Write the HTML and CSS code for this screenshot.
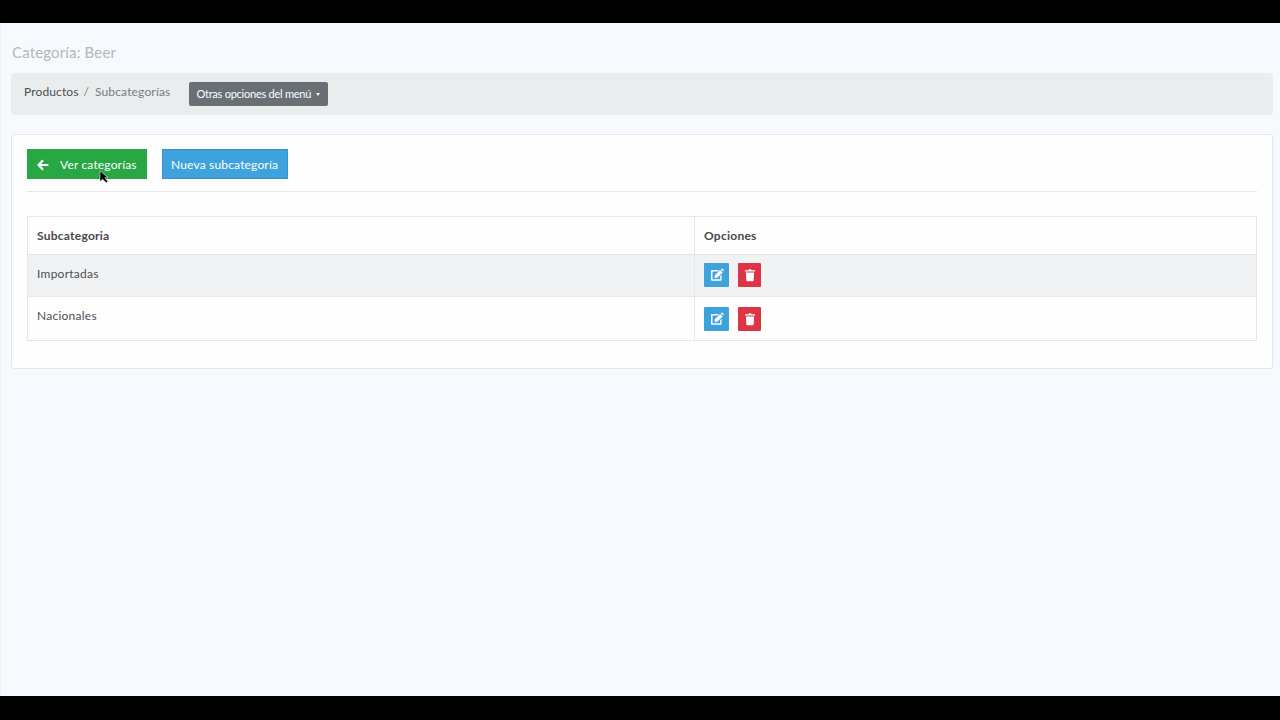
FILE: index.html
```html
<!DOCTYPE html>
<html lang="es">
<head>
<meta charset="utf-8">
<title>Subcategorías</title>
<link rel="stylesheet" href="styles.css">
</head>
<body>
<div class="letterbox-top"></div>
<main class="page">
  <h1 class="title">Categoría: Beer</h1>
  <nav class="crumbs">
    <span class="crumb-link">Productos</span>
    <span class="crumb-sep">/</span>
    <span class="crumb-current">Subcategorías</span>
    <button class="menu-btn">Otras opciones del menú<span class="caret"></span></button>
  </nav>
  <section class="card">
    <div class="toolbar">
      <button class="btn btn-green">
        <svg class="arrow" viewBox="0 0 12 12" width="12" height="12"><path d="M6 1.200 1.600 6 6 10.800M2 6h9.400" fill="none" stroke="#fff" stroke-width="2.200"/></svg>
        Ver categorías
        <svg class="cursor" viewBox="0 0 10 14" width="10" height="14"><path d="M1 1v10.500l2.600-2.300 3.600 3.500 1.600-1.400-3-3.600H9z" fill="#000" stroke="#fff" stroke-width=".5"/></svg>
      </button>
      <button class="btn btn-blue">Nueva subcategoría</button>
    </div>
    <table class="grid">
      <thead>
        <tr class="row-head"><th class="col-name">Subcategoria</th><th>Opciones</th></tr>
      </thead>
      <tbody>
        <tr class="row-odd">
          <td class="name">Importadas</td>
          <td class="actions">
            <div class="action-group action-group-high">
              <span class="icon-btn icon-blue"><svg viewBox="0 0 14 14" width="14" height="14"><path d="M10.200 8.200v3H2.500V3.600h5L9 2.100H2.300C1.500 2.100 1 2.600 1 3.400v8c0 .8.500 1.300 1.300 1.300h8c.8 0 1.300-.5 1.300-1.300V6.700z" fill="#fff"/><path d="M4.800 7.300 10.200 1.900 12.700 4.400 7.300 9.800 4.500 10.100zM10.900 1.200l.5-.4c.4-.3.800-.3 1.100 0l1 1c.3.3.3.800 0 1.100l-.4.500z" fill="#fff"/></svg></span>
              <span class="icon-btn icon-red"><svg viewBox="0 0 14 14" width="14" height="14"><path d="M2 2.200h3.400L6 1.200h2l.6 1H12v1.400H2zM2.900 4.600h8.200l-.5 8c0 .4-.3.700-.7.700H4.100c-.4 0-.7-.3-.7-.7z" fill="#fff"/></svg></span>
            </div>
          </td>
        </tr>
        <tr class="row-even">
          <td class="name">Nacionales</td>
          <td class="actions">
            <div class="action-group">
              <span class="icon-btn icon-blue"><svg viewBox="0 0 14 14" width="14" height="14"><path d="M10.200 8.200v3H2.500V3.600h5L9 2.100H2.300C1.500 2.100 1 2.600 1 3.400v8c0 .8.500 1.300 1.300 1.300h8c.8 0 1.300-.5 1.300-1.300V6.700z" fill="#fff"/><path d="M4.800 7.300 10.200 1.900 12.700 4.400 7.300 9.800 4.500 10.100zM10.900 1.200l.5-.4c.4-.3.800-.3 1.100 0l1 1c.3.3.3.800 0 1.100l-.4.500z" fill="#fff"/></svg></span>
              <span class="icon-btn icon-red"><svg viewBox="0 0 14 14" width="14" height="14"><path d="M2 2.200h3.400L6 1.200h2l.6 1H12v1.400H2zM2.900 4.600h8.200l-.5 8c0 .4-.3.700-.7.700H4.100c-.4 0-.7-.3-.7-.7z" fill="#fff"/></svg></span>
            </div>
          </td>
        </tr>
      </tbody>
    </table>
  </section>
</main>
<div class="letterbox-bottom"></div>
</body>
</html>
```
FILE: styles.css
```css
* { box-sizing: border-box; }
html, body { height: 100%; }
body {
  margin: 0;
  display: flex;
  flex-direction: column;
  height: 720px;
  overflow: hidden;
  background: #f6fafe;
  font-family: Lato, "Noto Sans", sans-serif;
  font-size: 12px;
  color: #3a3f44;
}
.letterbox-top { height: 23px; background: #000; flex: none; }
.letterbox-bottom { height: 24px; background: #000; flex: none; }
.page {
  flex: 1;
  padding: 20px 7px 0 11px;
  border-left: 1px solid #edf0f3;
}
.title {
  margin: 0 0 12px;
  font-size: 15px;
  line-height: 18px;
  font-weight: 400;
  letter-spacing: .15px;
  color: #b4b7b9;
}
.crumbs {
  display: flex;
  align-items: flex-start;
  height: 42px;
  margin: 0 0 19px -1px;
  padding: 9px 13px;
  background: #eaedee;
  border-radius: 3px;
  font-size: 12px;
  line-height: 20px;
}
.crumb-link { color: #4a4f53; letter-spacing: .12px; }
.crumb-sep { margin: 0 6px 0 5px; color: #7a8288; }
.crumb-current { color: #757c82; letter-spacing: .16px; }
.menu-btn {
  display: flex;
  align-items: center;
  width: 139px;
  height: 24px;
  margin-left: 19px;
  padding: 0 0 0 7px;
  border: 0;
  border-radius: 2px;
  background: #686f75;
  color: #fff;
  font: 11px/24px Lato, sans-serif;
  letter-spacing: -.24px;
}
.caret {
  margin-left: 5px;
  border-top: 3px solid #fff;
  border-left: 2.500px solid transparent;
  border-right: 2.500px solid transparent;
}
.card {
  margin-left: -1px;
  height: 235px;
  padding: 14px 15px 15px;
  background: #fefefe;
  border: 1px solid #e4e7ea;
  border-radius: 3px;
}
.toolbar {
  display: flex;
  gap: 15px;
  padding-bottom: 12px;
  margin-bottom: 24px;
  border-bottom: 1px solid #e4e7ea;
}
.btn {
  position: relative;
  display: flex;
  align-items: center;
  height: 30px;
  padding: 1px 8px 0;
  border: 0;
  color: #fff;
  font: 12px/30px Lato, sans-serif;
  letter-spacing: .17px;
}
.btn-green { width: 120px; padding-left: 10px; background: #28a745; }
.btn-blue { width: 126px; background: #3ea2dd; border: 1px solid #3793c9; padding-top: 2px; }
.arrow { margin-right: 11px; }
.cursor { position: absolute; left: 72px; top: 21px; }
.grid {
  width: 100%;
  table-layout: fixed;
  border-collapse: collapse;
  border: 1px solid #e4e7ea;
}
.grid th, .grid td {
  padding: 0 9px;
  border: 1px solid #e4e7ea;
  text-align: left;
  font-size: 12px;
}
.col-name { width: 667px; }
.grid th { height: 38px; font-weight: 700; color: #45494d; letter-spacing: .25px; }
.row-odd { background: #f1f2f4; height: 42px; }
.row-even { height: 44px; }
.grid td.name { vertical-align: top; padding-top: 10px; line-height: 17px; letter-spacing: .25px; color: #4a4f53; }
.action-group { display: flex; gap: 9px; }
.action-group-high { margin-top: -2px; }
.icon-btn {
  display: flex;
  align-items: center;
  justify-content: center;
  height: 24px;
  border-radius: 1px;
}
.icon-blue { width: 25px; background: #3ea2dd; }
.icon-red { width: 23px; background: #dc3545; }
```
